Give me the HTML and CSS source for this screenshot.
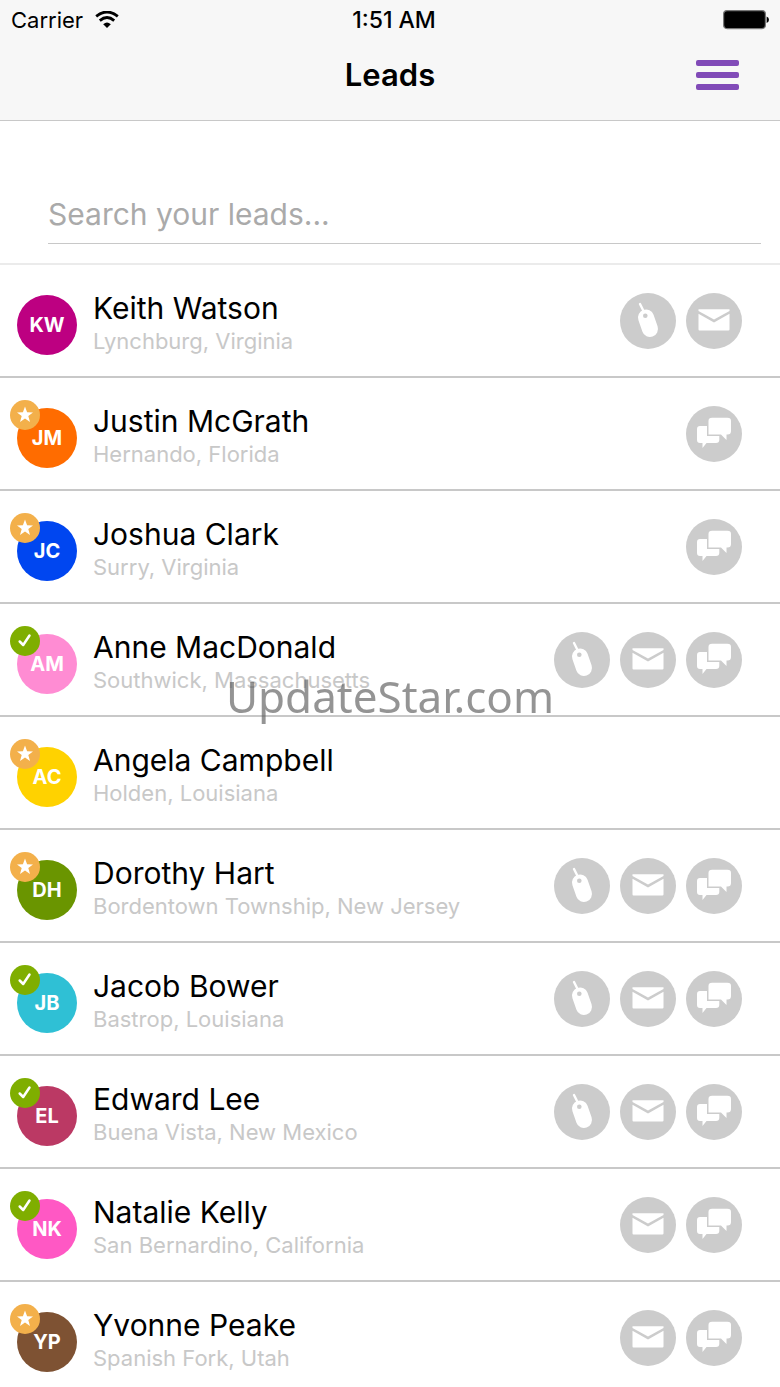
FILE: index.html
```html
<!DOCTYPE html>
<html lang="en">
<head>
    <meta charset="UTF-8">
    <meta name="viewport" content="width=device-width, initial-scale=1.0">
    <title>Leads</title>
    <link rel="stylesheet" href="styles.css">
</head>
<body>
    <!-- Shared icons -->
    <svg class="icon-defs" aria-hidden="true">
        <symbol id="icon-mouse" viewBox="0 0 56 56">
            <path d="M20 11L24 19" fill="none" stroke="#fff" stroke-width="2.4" stroke-linecap="round"/>
            <path d="M26 24.5L30 36" fill="none" stroke="#fff" stroke-width="16" stroke-linecap="round"/>
            <circle cx="25.3" cy="22.7" r="2.3" fill="#ccc"/>
        </symbol>
        <symbol id="icon-mail" viewBox="0 0 56 56">
            <path d="M12.5 16.3H43.5V18L28 26.5L12.5 18Z" fill="#fff"/>
            <path d="M12.5 20.8L28 29.4L43.5 20.8V36.5Q43.5 37.5 42.5 37.5H13.5Q12.5 37.5 12.5 36.5Z" fill="#fff"/>
        </symbol>
        <symbol id="icon-chat" viewBox="0 0 56 56">
            <path d="M14 20H30V30H33.3V34Q33.3 37 30 37H20.5L16.5 42V37H14Q11 37 11 34V23Q11 20 14 20Z" fill="#fff"/>
            <path d="M26 11.7H41.5Q45 11.7 45 15V25Q45 28.5 41.5 28.5H40.5V34L35 28.5H22.5V15Q22.5 11.7 26 11.7Z" fill="#fff" stroke="#ccc" stroke-width="3" paint-order="stroke"/>
        </symbol>
        <symbol id="icon-star" viewBox="0 0 30 30">
            <path d="M15 6.5L17.1 12.2L23 12.4L18.3 16L20 22L15 18.5L10 22L11.7 16L7 12.4L12.9 12.2Z" fill="#fff"/>
        </symbol>
        <symbol id="icon-check" viewBox="0 0 30 30">
            <path d="M9.7 15.5L13.2 19L19.5 9.5" fill="none" stroke="#fff" stroke-width="2.5" stroke-linecap="round" stroke-linejoin="round"/>
        </symbol>
    </svg>

    <header class="header">
        <div class="status-bar">
            <div class="carrier">
                <span>Carrier</span>
                <svg width="24" height="18" viewBox="0 0 24 18">
                    <path d="M1.2 5.4Q12 -3.4 22.8 5.4" fill="none" stroke="#000" stroke-width="2.8"/>
                    <path d="M4.8 9.6Q12 3.4 19.2 9.6" fill="none" stroke="#000" stroke-width="2.8"/>
                    <path d="M8.2 13.2Q12 9.6 15.8 13.2L12 17Z" fill="#000"/>
                </svg>
            </div>
            <span class="time">1:51 AM</span>
            <svg class="battery" width="46" height="20" viewBox="0 0 46 20">
                <rect x="0.6" y="0.6" width="41.8" height="18" rx="3.5" fill="#000" stroke="#777" stroke-width="1.2"/>
                <path d="M43.6 6.5Q46 7.5 46 9.8Q46 12 43.6 13Z" fill="#000"/>
            </svg>
        </div>
        <div class="nav-bar">
            <h1>Leads</h1>
            <button class="menu-button" type="button" aria-label="Menu">
                <span></span>
                <span></span>
                <span></span>
            </button>
        </div>
    </header>

    <form class="search">
        <input type="text" aria-label="Search your leads" placeholder="Search your leads...">
    </form>

    <ul class="lead-list">
        <li class="lead">
            <div class="avatar magenta">KW</div>
            <div class="lead-info">
                <h2>Keith Watson</h2>
                <p>Lynchburg, Virginia</p>
            </div>
            <div class="actions">
                <button type="button" aria-label="Activity"><svg><use href="#icon-mouse"/></svg></button>
                <button type="button" aria-label="Email"><svg><use href="#icon-mail"/></svg></button>
            </div>
        </li>
        <li class="lead">
            <div class="avatar orange">JM<svg class="badge star"><use href="#icon-star"/></svg></div>
            <div class="lead-info">
                <h2>Justin McGrath</h2>
                <p>Hernando, Florida</p>
            </div>
            <div class="actions">
                <button type="button" aria-label="Chat"><svg><use href="#icon-chat"/></svg></button>
            </div>
        </li>
        <li class="lead">
            <div class="avatar blue">JC<svg class="badge star"><use href="#icon-star"/></svg></div>
            <div class="lead-info">
                <h2>Joshua Clark</h2>
                <p>Surry, Virginia</p>
            </div>
            <div class="actions">
                <button type="button" aria-label="Chat"><svg><use href="#icon-chat"/></svg></button>
            </div>
        </li>
        <li class="lead">
            <div class="avatar pink">AM<svg class="badge check"><use href="#icon-check"/></svg></div>
            <div class="lead-info">
                <h2>Anne MacDonald</h2>
                <p>Southwick, Massachusetts</p>
            </div>
            <div class="actions">
                <button type="button" aria-label="Activity"><svg><use href="#icon-mouse"/></svg></button>
                <button type="button" aria-label="Email"><svg><use href="#icon-mail"/></svg></button>
                <button type="button" aria-label="Chat"><svg><use href="#icon-chat"/></svg></button>
            </div>
        </li>
        <li class="lead">
            <div class="avatar yellow">AC<svg class="badge star"><use href="#icon-star"/></svg></div>
            <div class="lead-info">
                <h2>Angela Campbell</h2>
                <p>Holden, Louisiana</p>
            </div>
        </li>
        <li class="lead">
            <div class="avatar green">DH<svg class="badge star"><use href="#icon-star"/></svg></div>
            <div class="lead-info">
                <h2>Dorothy Hart</h2>
                <p>Bordentown Township, New Jersey</p>
            </div>
            <div class="actions">
                <button type="button" aria-label="Activity"><svg><use href="#icon-mouse"/></svg></button>
                <button type="button" aria-label="Email"><svg><use href="#icon-mail"/></svg></button>
                <button type="button" aria-label="Chat"><svg><use href="#icon-chat"/></svg></button>
            </div>
        </li>
        <li class="lead">
            <div class="avatar cyan">JB<svg class="badge check"><use href="#icon-check"/></svg></div>
            <div class="lead-info">
                <h2>Jacob Bower</h2>
                <p>Bastrop, Louisiana</p>
            </div>
            <div class="actions">
                <button type="button" aria-label="Activity"><svg><use href="#icon-mouse"/></svg></button>
                <button type="button" aria-label="Email"><svg><use href="#icon-mail"/></svg></button>
                <button type="button" aria-label="Chat"><svg><use href="#icon-chat"/></svg></button>
            </div>
        </li>
        <li class="lead">
            <div class="avatar crimson">EL<svg class="badge check"><use href="#icon-check"/></svg></div>
            <div class="lead-info">
                <h2>Edward Lee</h2>
                <p>Buena Vista, New Mexico</p>
            </div>
            <div class="actions">
                <button type="button" aria-label="Activity"><svg><use href="#icon-mouse"/></svg></button>
                <button type="button" aria-label="Email"><svg><use href="#icon-mail"/></svg></button>
                <button type="button" aria-label="Chat"><svg><use href="#icon-chat"/></svg></button>
            </div>
        </li>
        <li class="lead">
            <div class="avatar hot-pink">NK<svg class="badge check"><use href="#icon-check"/></svg></div>
            <div class="lead-info">
                <h2>Natalie Kelly</h2>
                <p>San Bernardino, California</p>
            </div>
            <div class="actions">
                <button type="button" aria-label="Email"><svg><use href="#icon-mail"/></svg></button>
                <button type="button" aria-label="Chat"><svg><use href="#icon-chat"/></svg></button>
            </div>
        </li>
        <li class="lead">
            <div class="avatar brown">YP<svg class="badge star"><use href="#icon-star"/></svg></div>
            <div class="lead-info">
                <h2>Yvonne Peake</h2>
                <p>Spanish Fork, Utah</p>
            </div>
            <div class="actions">
                <button type="button" aria-label="Email"><svg><use href="#icon-mail"/></svg></button>
                <button type="button" aria-label="Chat"><svg><use href="#icon-chat"/></svg></button>
            </div>
        </li>
    </ul>

    <div class="watermark">UpdateStar.com</div>
</body>
</html>
```
FILE: styles.css
```css
* {
    box-sizing: border-box;
}
body {
    display: flex;
    flex-direction: column;
    height: 100vh;
    margin: 0;
    overflow: hidden;
    font-family: Inter, "Liberation Sans", sans-serif;
    background: #fff;
    color: #000;
}
h1, h2, p {
    margin: 0;
}
button {
    padding: 0;
    border: none;
    cursor: pointer;
}
.icon-defs {
    position: absolute;
    width: 0;
    height: 0;
}

/* Header */
.header {
    flex-shrink: 0;
    background: #f7f7f7;
    border-bottom: 1px solid #c8c8c8;
}
.status-bar {
    display: grid;
    grid-template-columns: 1fr auto 1fr;
    align-items: center;
    height: 40px;
    padding: 0 11px;
    font-size: 22px;
}
.carrier {
    display: flex;
    align-items: center;
    gap: 12px;
}
.time {
    padding-left: 8px;
    font-size: 23px;
    font-weight: 500;
}
.battery {
    justify-self: end;
}
.nav-bar {
    display: grid;
    grid-template-columns: 1fr auto 1fr;
    align-items: center;
    height: 80px;
    padding: 0 41px 10px;
}
.nav-bar h1 {
    grid-column: 2;
    font-size: 31px;
    line-height: 40px;
    font-weight: 600;
}
.menu-button {
    display: flex;
    flex-direction: column;
    justify-self: end;
    gap: 6px;
    width: 43px;
    background: none;
}
.menu-button span {
    width: 100%;
    height: 6px;
    border-radius: 2px;
    background: #814bb8;
}

/* Search */
.search {
    flex-shrink: 0;
    padding: 63px 19px 19px 48px;
    border-bottom: 2px solid #ebebeb;
}
.search input {
    display: block;
    width: 100%;
    height: 60px;
    padding: 0;
    border: none;
    border-bottom: 1px solid #c8c8c8;
    outline: none;
    background: none;
    font-family: inherit;
    font-size: 30px;
}
.search input::placeholder {
    color: #aaa;
    opacity: 1;
}

/* Leads */
.lead-list {
    flex: 1;
    min-height: 0;
    margin: 0;
    padding: 0;
    overflow: hidden;
    list-style: none;
}
.lead {
    display: flex;
    align-items: center;
    height: 113px;
    padding: 0 38px 0 17px;
    border-bottom: 2px solid #c8c8c8;
}
.avatar {
    position: relative;
    flex-shrink: 0;
    width: 60px;
    height: 60px;
    margin: 8px 16px 0 0;
    border-radius: 50%;
    color: #fff;
    font-size: 20px;
    line-height: 60px;
    font-weight: 700;
    text-align: center;
}
.badge {
    position: absolute;
    top: -8px;
    left: -7px;
    width: 30px;
    height: 30px;
    border-radius: 50%;
}
.star {
    background: #f3b04b;
}
.check {
    background: #7fae00;
}
.magenta {
    background: #bd0081;
}
.orange {
    background: #ff6c00;
}
.blue {
    background: #0046f0;
}
.pink {
    background: #ff8cd3;
}
.yellow {
    background: #ffd200;
}
.green {
    background: #6a9500;
}
.cyan {
    background: #2fc0d5;
}
.crimson {
    background: #bb3964;
}
.hot-pink {
    background: #ff58c4;
}
.brown {
    background: #7e5233;
}
.lead-info {
    flex: 1;
    padding-top: 2px;
}
.lead-info h2 {
    font-size: 30px;
    line-height: 38px;
    font-weight: 400;
}
.lead-info p {
    color: #c8c8c8;
    font-size: 22px;
    line-height: 28px;
}
.actions {
    display: flex;
    gap: 10px;
}
.actions button {
    width: 56px;
    height: 56px;
    border-radius: 50%;
    background: #ccc;
}
.actions svg {
    display: block;
    width: 56px;
    height: 56px;
}

/* Watermark */
.watermark {
    position: fixed;
    inset: 0;
    display: flex;
    align-items: center;
    justify-content: center;
    padding-top: 4px;
    color: rgba(90, 90, 90, 0.65);
    font-family: "Noto Sans", "Open Sans", sans-serif;
    font-size: 44px;
    pointer-events: none;
}
```
